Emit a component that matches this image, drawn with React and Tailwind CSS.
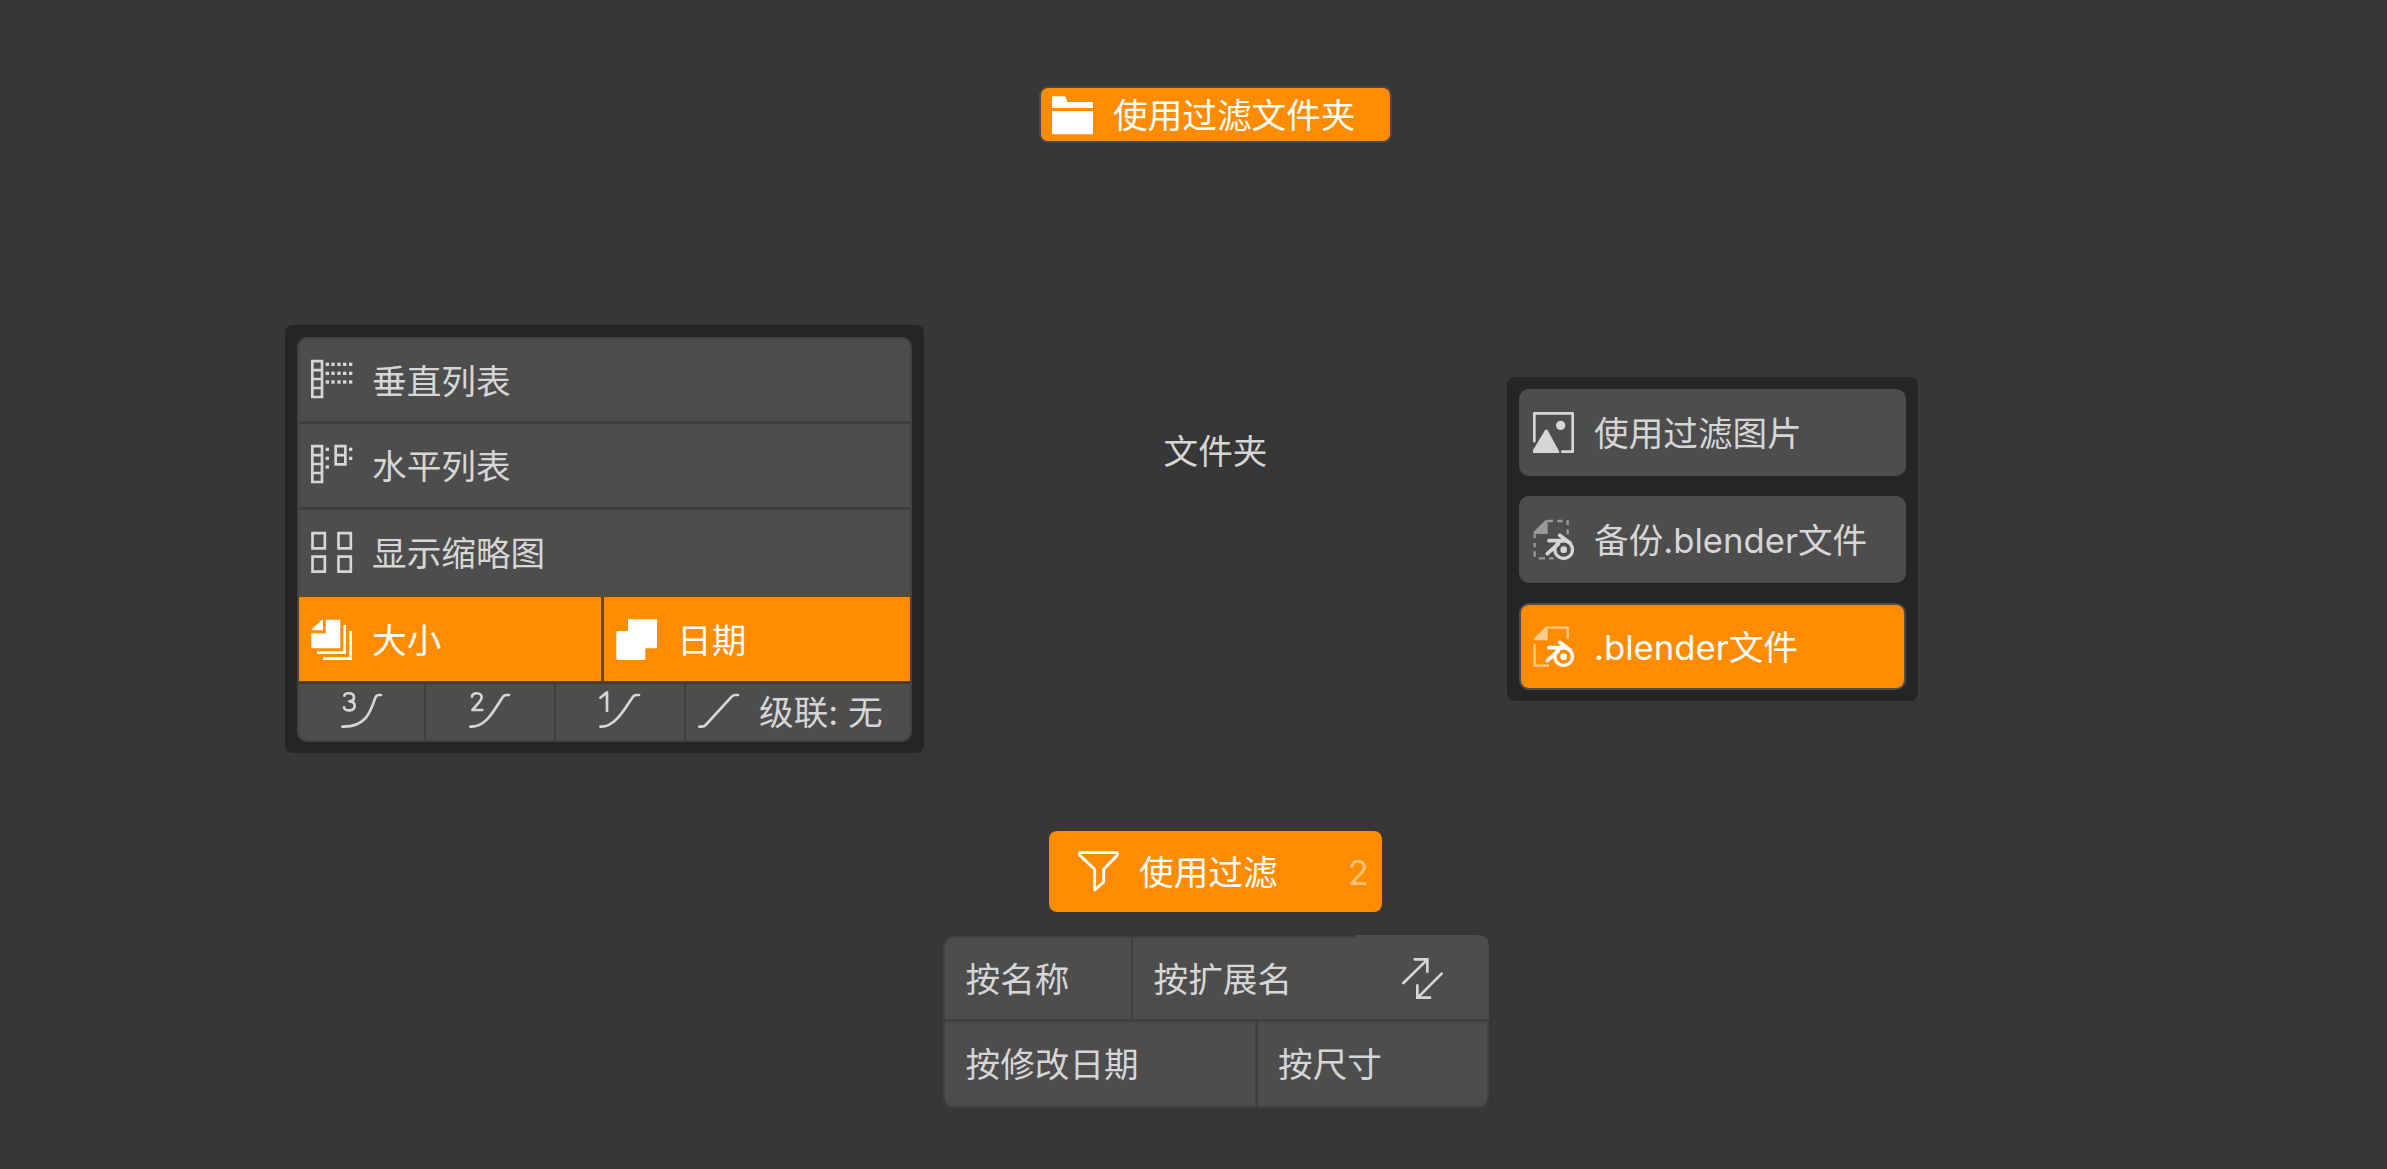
const S = "#d6d6d6";

function Icon({ children, className = "" }) {
  return (
    <svg viewBox="0 0 123 123" width="41" height="41" fill="none" className={"shrink-0 overflow-visible " + className}>
      {children}
    </svg>
  );
}

function Dots({ xs, ys }) {
  return ys.map((y) => xs.map((x) => <rect key={x + "-" + y} x={x - 5} y={y - 5} width="10" height="10" fill={S} />));
}

function VerticalListIcon() {
  return (
    <Icon>
      <path d="M4 3.5H33V111H4ZM4 30.5H33M4 57H33M4 84H33" stroke={S} strokeWidth="8" />
      <Dots xs={[49, 66, 84, 101, 119]} ys={[13, 40, 66]} />
    </Icon>
  );
}

function HorizontalListIcon() {
  return (
    <Icon>
      <path d="M4 3.5H33V111H4ZM4 30.5H33M4 57H33M4 84H33M74 3.5H103V58H74ZM74 30.5H103" stroke={S} strokeWidth="8" />
      <Dots xs={[49]} ys={[13, 40, 66]} />
      <Dots xs={[119]} ys={[13, 40]} />
    </Icon>
  );
}

function ThumbnailIcon() {
  return (
    <Icon>
      <path d="M4.5 3.5H41.5V49H4.5ZM82.5 3.5H119.5V49H82.5ZM4.5 74H41.5V119H4.5ZM82.5 74H119.5V119H82.5Z" stroke={S} strokeWidth="8" />
    </Icon>
  );
}

function SizeIcon() {
  return (
    <Icon>
      <path d="M33 2H36V34H2V31ZM44 4Q44 2 46 2H86Q88 2 88 4V86Q88 88 86 88H3Q1 88 1 86V43H44Z" fill="#fff" />
      <path d="M101 18V101H18M119 36V119H36" stroke="#fff" strokeWidth="8" />
    </Icon>
  );
}

function DateIcon() {
  return (
    <Icon>
      <path d="M36 2Q36 1 38 1H121Q123 1 123 3V86Q123 88 121 88H88V121Q88 123 86 123H3Q1 123 1 121V38Q1 36 3 36H36Z" fill="#fff" />
    </Icon>
  );
}

function FolderIcon() {
  return (
    <Icon className="mt-[2px]">
      <path d="M0 7Q0 4 3 4H38Q40 4 41 6L46 21H121Q123 21 123 23V39H0ZM0 48H123V115Q123 118 120 118H3Q0 118 0 115Z" fill="#fff" />
    </Icon>
  );
}

const curves = {
  3: {
    digit: "M10 14C11 4 39 3 39 19Q39 31 25 31Q41 31 41 45C41 62 11 62 9 49",
    line: "M4 107C72 109 88 66 103 20Q106 12 114 12H120",
  },
  2: {
    digit: "M9 17C9 3 38 3 38 19C38 30 25 38 10 57H40",
    line: "M4 107C52 109 76 55 100 20Q105 12 112 12H120",
  },
  1: {
    digit: "M4 20L24 4V60",
    line: "M4 107C48 109 76 55 100 20Q105 12 112 12H120",
  },
  0: { digit: "", line: "M4 107H12Q18 107 23 102L101 17Q106 12 112 12H120" },
};

function CurveIcon({ level }) {
  return (
    <Icon className="mb-[2px]">
      <path d={curves[level].digit + curves[level].line} stroke={S} strokeWidth="8" strokeLinecap="round" strokeLinejoin="round" />
    </Icon>
  );
}

function ImageIcon() {
  return (
    <Icon>
      <path d="M4 88V4H119V119H88" stroke={S} strokeWidth="8" strokeLinejoin="round" strokeLinecap="round" />
      <path d="M0 123V114L36 55Q40 50 44 55L79 119Q80 123 76 123Z" fill={S} />
      <circle cx="83" cy="40" r="14" fill={S} />
    </Icon>
  );
}

function BlendMark({ color }) {
  return (
    <>
      <circle cx="92" cy="92" r="26.5" stroke={color} strokeWidth="10" />
      <circle cx="92" cy="92" r="10" fill={color} />
      <path d="M80 49L112 73M48 65H86M43 104L76 75" stroke={color} strokeWidth="11" strokeLinecap="round" />
    </>
  );
}

function BackupIcon() {
  return (
    <Icon>
      <path d="M2 45V38L38 3H44V45Z" fill="#999" />
      <path d="M44 6H60M73 6H89M104 3V18M104 31V46M5 46V58M5 72V85M5 97V113M17 118H36M48 118H62" stroke="#999" strokeWidth="7" />
      <BlendMark color={S} />
    </Icon>
  );
}

function BlendFileIcon() {
  return (
    <Icon>
      <path d="M2 43V38L38 2H44V43Z" fill="#ffcb8a" />
      <path d="M40 5H104V38M5 54V119H48" stroke="#ffcb8a" strokeWidth="7" />
      <BlendMark color="#fff" />
    </Icon>
  );
}

function FilterIcon() {
  return (
    <Icon>
      <path d="M5 5H118V13L77 55V93L50 117V55L5 13Z" stroke="#fff" strokeWidth="8.5" strokeLinejoin="round" />
    </Icon>
  );
}

function SwapIcon() {
  return (
    <Icon className="mt-[2px]">
      <path d="M4 75L76 5M38 4H76V41M119 47L48 118M46 82V119H84" stroke={S} strokeWidth="8" strokeLinecap="round" />
    </Icon>
  );
}

function ViewRow({ icon, label, className }) {
  return (
    <div className={"flex items-center bg-[#4d4d4d] pl-[12px] " + className}>
      {icon}
      <span className="mt-[2px] ml-[20px]">{label}</span>
    </div>
  );
}

function DisplayPanel() {
  return (
    <section className="mt-[325px] ml-[285px] h-[428px] w-[639px] shrink-0 rounded-lg bg-[#252525] p-[12px] pb-[11px]">
      <div className="flex h-full flex-col overflow-hidden rounded-[10px] border-2 border-[#434343] bg-[#3e3e3e]">
        <ViewRow icon={<VerticalListIcon />} label="垂直列表" className="mb-[3px] h-[82px]" />
        <ViewRow icon={<HorizontalListIcon />} label="水平列表" className="mb-[3px] h-[83px]" />
        <ViewRow icon={<ThumbnailIcon />} label="显示缩略图" className="h-[86px] pb-[2px]" />
        <div className="flex h-[86px] gap-[3px] border-y border-[#6b4518] bg-[#6b4518] text-white">
          <div className="flex w-[302px] items-center bg-[#ff8c00] pl-[12px]">
            <SizeIcon />
            <span className="mt-[2px] ml-[20px]">大小</span>
          </div>
          <div className="flex flex-1 items-center bg-[#ff8c00] pl-[12px]">
            <DateIcon />
            <span className="mt-[2px] ml-[20px]">日期</span>
          </div>
        </div>
        <div className="mt-[2px] flex flex-1 gap-[2px]">
          <div className="flex w-[125px] items-center bg-[#4d4d4d] pl-[42px]"><CurveIcon level={3} /></div>
          <div className="flex w-[128px] items-center bg-[#4d4d4d] pl-[43px]"><CurveIcon level={2} /></div>
          <div className="flex w-[128px] items-center bg-[#4d4d4d] pl-[43px]"><CurveIcon level={1} /></div>
          <div className="flex flex-1 items-center bg-[#4d4d4d] pl-[12px]">
            <CurveIcon level={0} />
            <span className="ml-[20px]">级联: 无</span>
          </div>
        </div>
      </div>
    </section>
  );
}

function FileTypePanel() {
  return (
    <section className="mt-[377px] ml-[17px] flex h-[324px] w-[411px] shrink-0 flex-col gap-[20px] rounded-lg bg-[#252525] px-[12px] pt-[12px]">
      <div className="flex h-[87px] items-center rounded-[10px] bg-[#4d4d4d] pl-[14px]">
        <ImageIcon />
        <span className="mt-px ml-[20px]">使用过滤图片</span>
      </div>
      <div className="flex h-[87px] items-center rounded-[10px] bg-[#4d4d4d] pl-[14px]">
        <BackupIcon />
        <span className="mt-px ml-[20px]">备份.blender文件</span>
      </div>
      <div className="flex h-[87px] items-center rounded-[10px] border-2 border-[#4d4d4d] bg-[#ff8c00] pl-[12px] text-white">
        <BlendFileIcon />
        <span className="mt-px ml-[20px]">.blender文件</span>
      </div>
    </section>
  );
}

function SortTable() {
  return (
    <div className="mt-[23px] flex w-[546px] flex-col">
      <div className="flex h-[84px] items-end">
        <div className="flex h-[83px] w-[413px] gap-[2px] rounded-tl-[10px] border-t-2 border-l-2 border-[#404040] bg-[#404040]">
          <div className="flex w-[186px] items-center rounded-tl-lg bg-[#4d4d4d] pt-[2px] pl-[20.5px]">按名称</div>
          <div className="flex flex-1 items-center bg-[#4d4d4d] pt-[2px] pl-[20.5px]">按扩展名</div>
        </div>
        <div className="flex h-[84px] flex-1 items-center rounded-tr-[10px] bg-[#4d4d4d] pl-[46px]">
          <SwapIcon />
        </div>
      </div>
      <div className="flex h-[89px] gap-[3px] rounded-b-[10px] border-2 border-t-3 border-[#404040] bg-[#404040]">
        <div className="flex w-[310px] items-center rounded-bl-lg bg-[#4d4d4d] pt-px pl-[20.5px]">按修改日期</div>
        <div className="flex flex-1 items-center rounded-br-lg bg-[#4d4d4d] pt-px pl-[20px]">按尺寸</div>
      </div>
    </div>
  );
}

function CenterColumn() {
  return (
    <section className="ml-[19px] flex w-[547px] shrink-0 flex-col items-start pt-[86px]">
      <div className="ml-[96px] flex h-[57px] w-[353px] items-center rounded-[9px] border-2 border-[#484848] bg-[#ff8c00] pl-[11px] text-white">
        <FolderIcon />
        <span className="mt-[2px] ml-[20px]">使用过滤文件夹</span>
      </div>
      <div className="mt-[283px] ml-[220.5px] flex h-[50px] items-center">文件夹</div>
      <div className="mt-[355px] ml-[106px] flex h-[81px] w-[333px] items-center rounded-lg bg-[#ff8c00] pr-[13px] pl-[29px] text-white">
        <FilterIcon />
        <span className="mt-[2px] ml-[20px]">使用过滤</span>
        <span className="mt-[2px] ml-auto text-[#ffc27a]">2</span>
      </div>
      <SortTable />
    </section>
  );
}

export default function App() {
  return (
    <main className="flex h-[1169px] w-[2387px] items-start overflow-hidden bg-[#373737] font-['Inter','Noto_Sans_CJK_SC',sans-serif] text-[34.65px] leading-none whitespace-nowrap text-[#d6d6d6]">
      <DisplayPanel />
      <CenterColumn />
      <FileTypePanel />
    </main>
  );
}
